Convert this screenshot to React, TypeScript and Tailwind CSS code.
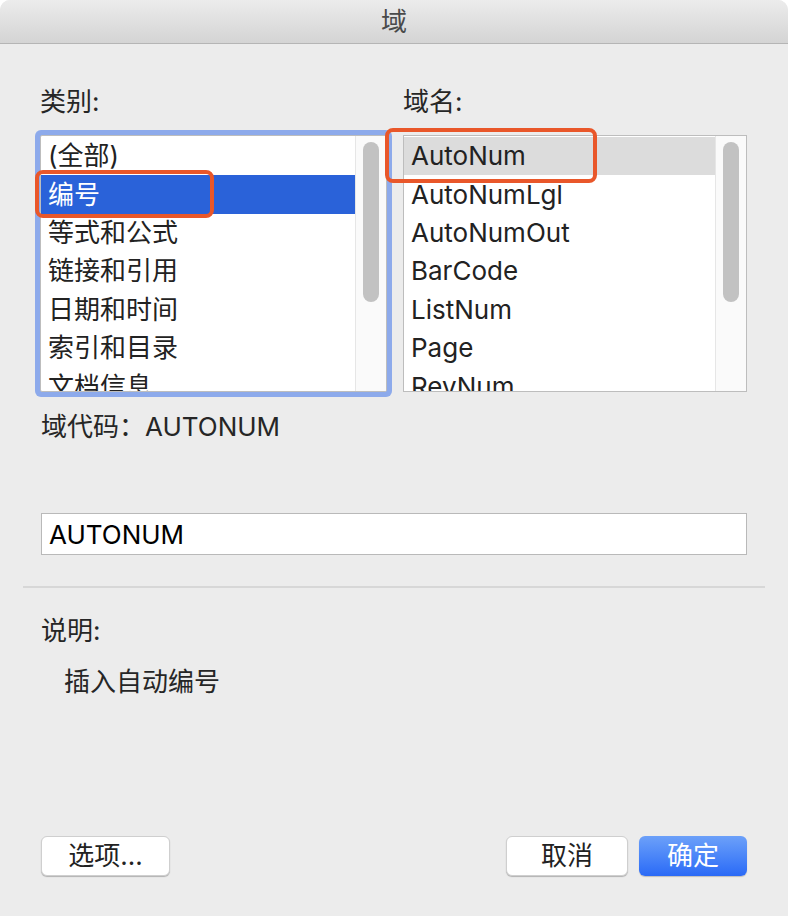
import React from 'react';

const categories = ['(全部)', '编号', '等式和公式', '链接和引用', '日期和时间', '索引和目录', '文档信息'];
const fieldNames = ['AutoNum', 'AutoNumLgl', 'AutoNumOut', 'BarCode', 'ListNum', 'Page', 'RevNum'];

const font = { fontFamily: 'Inter, "Noto Sans CJK SC", sans-serif' };

const ListBox: React.FC<{
  items: string[];
  selected: number;
  active: boolean;
  width: string;
}> = ({ items, selected, active, width }) => (
  <div
    className={`relative h-[257px] ${width} border border-[#bdbdbd] bg-white overflow-hidden flex ${
      active ? 'rounded-[2px] shadow-[0_0_0_5px_#8daaeb]' : ''
    }`}
  >
    <div className="flex-1 flex flex-col overflow-hidden pt-[1px]">
      {items.map((it, i) => {
        const isSel = i === selected;
        const cls = isSel
          ? active
            ? 'bg-[#2a62d9] text-white'
            : 'bg-[#dcdcdc] text-[#222]'
          : 'text-[#222]';
        return (
          <div key={it} className={`h-[38.4px] shrink-0 flex items-center pl-[7px] text-[26px] leading-[30px] ${cls}`}>
            {it}
          </div>
        );
      })}
    </div>
    {/* scrollbar */}
    <div className="w-[31px] shrink-0 bg-[#fafafa] border-l border-[#e6e6e6] pt-[6px] flex justify-center">
      <div className="w-[16px] h-[160px] rounded-full bg-[#c2c2c2]" />
    </div>
  </div>
);

const App: React.FC = () => {
  return (
    <div className="w-[788px] h-[916px] bg-white" style={font}>
      <div className="w-full h-full bg-[#ececec] rounded-t-[10px] overflow-hidden flex flex-col relative">
        {/* Title bar */}
        <div className="h-[44px] shrink-0 bg-gradient-to-b from-[#ececec] to-[#d4d4d4] border-b border-[#b5b5b5] flex items-center justify-center">
          <span className="text-[26px] leading-[30px] text-[#4a4a4a]">域</span>
        </div>

        <div className="flex flex-col px-[40px]">
          {/* Labels */}
          <div className="grid grid-cols-[347px_344px] gap-x-[16px] mt-[43px]">
            <div className="text-[26px] leading-[30px] text-[#262626]">类别:</div>
            <div className="text-[26px] leading-[30px] text-[#262626]">域名:</div>
          </div>

          {/* Lists */}
          <div className="grid grid-cols-[347px_344px] gap-x-[16px] mt-[18px]">
            <ListBox items={categories} selected={1} active width="w-[347px]" />
            <ListBox items={fieldNames} selected={0} active={false} width="w-[344px]" />
          </div>

          {/* Field code */}
          <div className="mt-[20px] text-[26px] leading-[30px] text-[#262626] pl-[1px]">
            域代码：AUTONUM
          </div>

          {/* Input */}
          <div className="mt-[71px] ml-[1px] w-[706px] h-[42px] bg-white border border-[#b9b9b9] flex items-center pl-[7px] text-[26px] text-black">
            AUTONUM
          </div>
        </div>

        {/* Separator */}
        <div className="mx-[23px] mt-[31px] h-[2px] bg-[#d7d7d7]" />

        <div className="px-[41px] flex flex-col">
          <div className="mt-[28px] text-[26px] leading-[30px] text-[#262626]">说明:</div>
          <div className="mt-[21px] pl-[23px] text-[26px] leading-[30px] text-[#262626]">插入自动编号</div>
        </div>

        {/* Buttons */}
        <div className="mt-[139px] px-[41px] flex items-center">
          <button className="w-[129px] h-[40px] bg-white rounded-[6px] border border-[#cfcfcf] shadow-[0_1px_1px_rgba(0,0,0,0.25)] text-[26px] leading-[30px] text-[#222] flex items-center justify-center">
            选项...
          </button>
          <div className="flex-1" />
          <button className="w-[122px] h-[40px] bg-white rounded-[6px] border border-[#cfcfcf] shadow-[0_1px_1px_rgba(0,0,0,0.25)] text-[26px] leading-[30px] text-[#222] flex items-center justify-center">
            取消
          </button>
          <button className="ml-[11px] w-[108px] h-[40px] rounded-[6px] bg-gradient-to-b from-[#6ca0f9] to-[#2a69f6] shadow-[0_1px_1px_rgba(0,0,0,0.2)] text-[26px] leading-[30px] text-white flex items-center justify-center">
            确定
          </button>
        </div>

        {/* Annotation boxes */}
        <div className="absolute left-[35px] top-[170px] w-[179px] h-[48px] border-[4px] border-[#e9572a] rounded-[8px]" />
        <div className="absolute left-[385px] top-[128px] w-[212px] h-[55px] border-[4px] border-[#e9572a] rounded-[8px]" />
      </div>
    </div>
  );
};

export default App;
